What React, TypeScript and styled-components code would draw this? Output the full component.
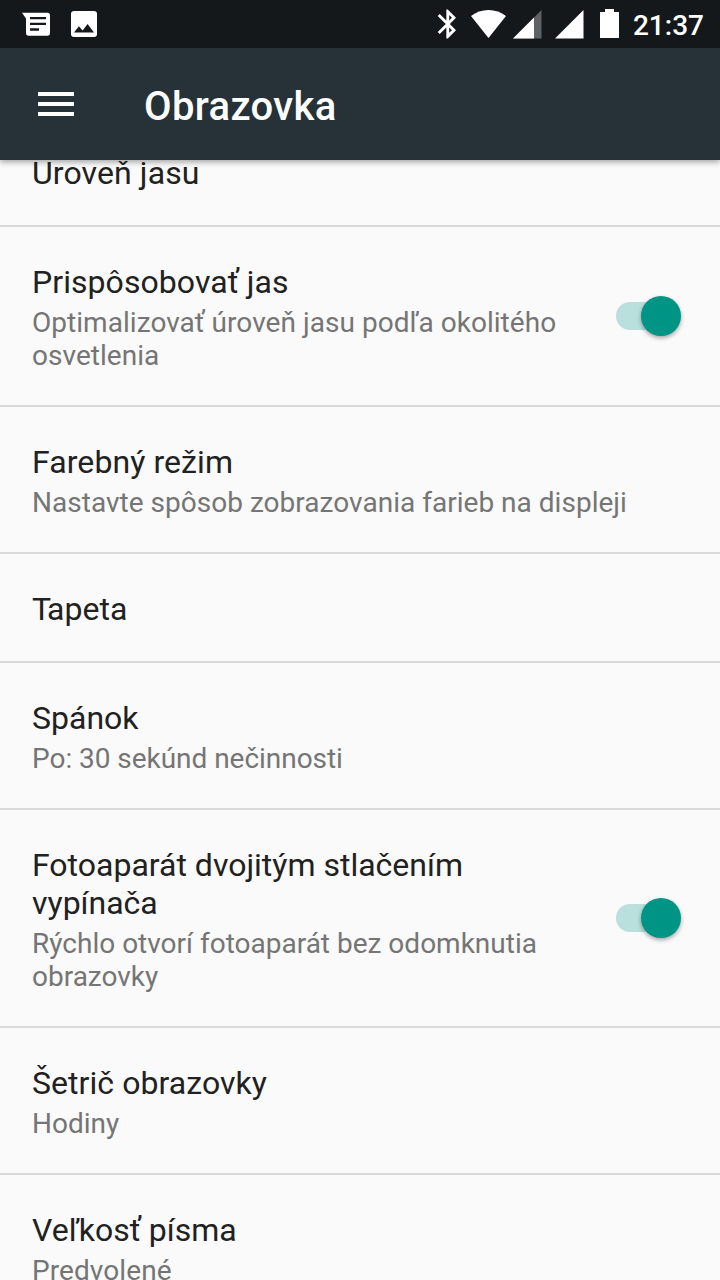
import React from "react";
import styled, { createGlobalStyle } from "styled-components";

const GlobalStyle = createGlobalStyle`
  * { box-sizing: border-box; }
  html, body { margin: 0; padding: 0; background: #fafafa; }
  body { font-family: Roboto, "Noto Sans", sans-serif; overflow: hidden; }
`;

const Screen = styled.div`
  width: 720px;
  height: 1280px;
  display: flex;
  flex-direction: column;
  overflow: hidden;
  background: #fafafa;
`;

const StatusBar = styled.div`
  flex: none;
  height: 48px;
  display: flex;
  align-items: center;
  justify-content: space-between;
  padding: 0 16px 0 20px;
  background: #14181b;
  color: #fff;
  z-index: 2;
`;

const StatusGroup = styled.div`
  display: flex;
  align-items: center;
`;

const StatusIcon = styled.svg<{ $gap?: number }>`
  display: block;
  flex: none;
  margin-right: ${(p) => p.$gap ?? 0}px;
`;

const Clock = styled.span`
  font-size: 28px;
  line-height: 44px;
  font-weight: 500;
  padding-top: 4px;
`;

const AppBar = styled.header`
  flex: none;
  height: 112px;
  display: flex;
  align-items: center;
  padding: 0 38px;
  background: #263238;
  color: #fff;
  box-shadow: 0 2px 6px rgba(0, 0, 0, 0.36);
  z-index: 1;
`;

const MenuButton = styled.button`
  width: 36px;
  height: 24px;
  display: flex;
  flex-direction: column;
  justify-content: space-between;
  padding: 0;
  border: 0;
  background: none;
`;

const MenuLine = styled.span`
  height: 4px;
  width: 100%;
  background: #fff;
`;

const Title = styled.h1`
  margin: 6px 0 0 70px;
  font-size: 40px;
  line-height: 48px;
  font-weight: 500;
  letter-spacing: 0.35px;
`;

const List = styled.main`
  flex: none;
  margin-top: -42px;
`;

const Row = styled.section`
  display: flex;
  align-items: center;
  padding: 36px 32px 33px;
  border-bottom: 2px solid #dadada;
`;

const RowText = styled.div`
  flex: 1;
  min-width: 0;
`;

const RowTitle = styled.div<{ $tracking?: number }>`
  font-size: 32px;
  line-height: 38px;
  letter-spacing: ${(p) => p.$tracking ?? 0}px;
  color: #212121;
  white-space: pre-line;
`;

const RowSummary = styled.div<{ $tracking?: number }>`
  margin-top: 5px;
  font-size: 28px;
  line-height: 33px;
  letter-spacing: ${(p) => p.$tracking ?? 0}px;
  color: #757575;
  white-space: pre-line;
`;

const Kern = styled.span`
  letter-spacing: -4px;
`;

const Track = styled.div`
  flex: none;
  width: 64px;
  height: 28px;
  margin: 0 8px 4px 0;
  display: flex;
  align-items: center;
  justify-content: flex-end;
  border-radius: 14px;
  background: #b9e0dc;
`;

const Thumb = styled.div`
  flex: none;
  width: 40px;
  height: 40px;
  margin-right: -1px;
  border-radius: 50%;
  background: #009485;
  box-shadow: 0 2px 4px rgba(0, 0, 0, 0.35);
`;

interface Item {
  id: string;
  title: React.ReactNode;
  summary?: string;
  toggle?: boolean;
  titleTracking?: number;
  summaryTracking?: number;
}

const items: Item[] = [
  { id: "level", title: "Úroveň jasu", titleTracking: 0.1 },
  {
    id: "adaptive",
    title: "Prispôsobovať jas",
    titleTracking: 0.06,
    summary: "Optimalizovať úroveň jasu podľa okolitého\nosvetlenia",
    summaryTracking: 0.04,
    toggle: true,
  },
  {
    id: "color",
    title: "Farebný režim",
    titleTracking: 0.08,
    summary: "Nastavte spôsob zobrazovania farieb na displeji",
    summaryTracking: 0.02,
  },
  {
    id: "wallpaper",
    title: (
      <>
        <Kern>T</Kern>apeta
      </>
    ),
  },
  { id: "sleep", title: "Spánok", summary: "Po: 30 sekúnd nečinnosti", summaryTracking: -0.04 },
  {
    id: "camera",
    title: "Fotoaparát dvojitým stlačením\nvypínača",
    summary: "Rýchlo otvorí fotoaparát bez odomknutia\nobrazovky",
    toggle: true,
  },
  { id: "saver", title: "Šetrič obrazovky", titleTracking: 0.06, summary: "Hodiny" },
  { id: "font", title: "Veľkosť písma", summary: "Predvolené", summaryTracking: 0.08 },
];

const MessageIcon = () => (
  <StatusIcon $gap={19} width="32" height="48" viewBox="20 0 32 48">
    <path
      fill="#fff"
      fillRule="evenodd"
      d="M22 12.700h25.400a2.600 2.600 0 0 1 2.600 2.600v17.800a2.600 2.600 0 0 1-2.600 2.600H28.600a2.600 2.600 0 0 1-2.600-2.600V18.500zM30 17v2.300h16V17zM30 22.700v2.300h16v-2.300zM30 28.300v2.400h9v-2.400z"
    />
  </StatusIcon>
);

const ImageIcon = () => (
  <StatusIcon width="26" height="48" viewBox="71 0 26 48">
    <path
      fill="#fff"
      fillRule="evenodd"
      d="M74 11h20a3 3 0 0 1 3 3v20a3 3 0 0 1-3 3H74a3 3 0 0 1-3-3V14a3 3 0 0 1 3-3zM78.900 26.200L74 32.600h20L87.600 24l-5 6.500z"
    />
  </StatusIcon>
);

const BluetoothIcon = () => (
  <StatusIcon $gap={14} width="20" height="48" viewBox="437 0 20 48">
    <path
      fill="#fff"
      transform="translate(430.5 6.7) scale(1.44)"
      d="M17.71 7.710L12 2h-1v7.590L6.410 5 5 6.410 10.590 12 5 17.590 6.410 19 11 14.410V22h1l5.710-5.710L13.410 12zM13 5.830l1.880 1.880L13 9.590zM14.880 16.290L13 18.170v-3.760z"
    />
  </StatusIcon>
);

const WifiIcon = () => (
  <StatusIcon $gap={7} width="35" height="48" viewBox="470.500 0 35 48">
    <path fill="#fff" d="M488 38L470.500 16C475.500 12 481.500 10 488 10s12.500 2 17.500 6z" />
  </StatusIcon>
);

const SignalIcon = ({ weak, gap }: { weak?: boolean; gap: number }) => (
  <StatusIcon $gap={gap} width="29" height="48" viewBox="0 0 29 48">
    <path fill={weak ? "#5f6264" : "#fff"} d="M0 38.500L28.500 10v28.500z" />
    {weak && <path fill="#fff" d="M0 38.500L21 17.500v21z" />}
  </StatusIcon>
);

const BatteryIcon = () => (
  <StatusIcon $gap={14} width="19" height="48" viewBox="600 0 19 48">
    <path fill="#fff" d="M605 9h9v3h5v26h-19V12h5z" />
  </StatusIcon>
);

export default function App() {
  return (
    <Screen>
      <GlobalStyle />
      <StatusBar>
        <StatusGroup>
          <MessageIcon />
          <ImageIcon />
        </StatusGroup>
        <StatusGroup>
          <BluetoothIcon />
          <WifiIcon />
          <SignalIcon weak gap={13} />
          <SignalIcon gap={16} />
          <BatteryIcon />
          <Clock>21:37</Clock>
        </StatusGroup>
      </StatusBar>
      <AppBar>
        <MenuButton aria-label="Menu">
          <MenuLine />
          <MenuLine />
          <MenuLine />
        </MenuButton>
        <Title>Obrazovka</Title>
      </AppBar>
      <List>
        {items.map((item) => (
          <Row key={item.id}>
            <RowText>
              <RowTitle $tracking={item.titleTracking}>{item.title}</RowTitle>
              {item.summary && (
                <RowSummary $tracking={item.summaryTracking}>{item.summary}</RowSummary>
              )}
            </RowText>
            {item.toggle && (
              <Track role="switch" aria-checked="true">
                <Thumb />
              </Track>
            )}
          </Row>
        ))}
      </List>
    </Screen>
  );
}
